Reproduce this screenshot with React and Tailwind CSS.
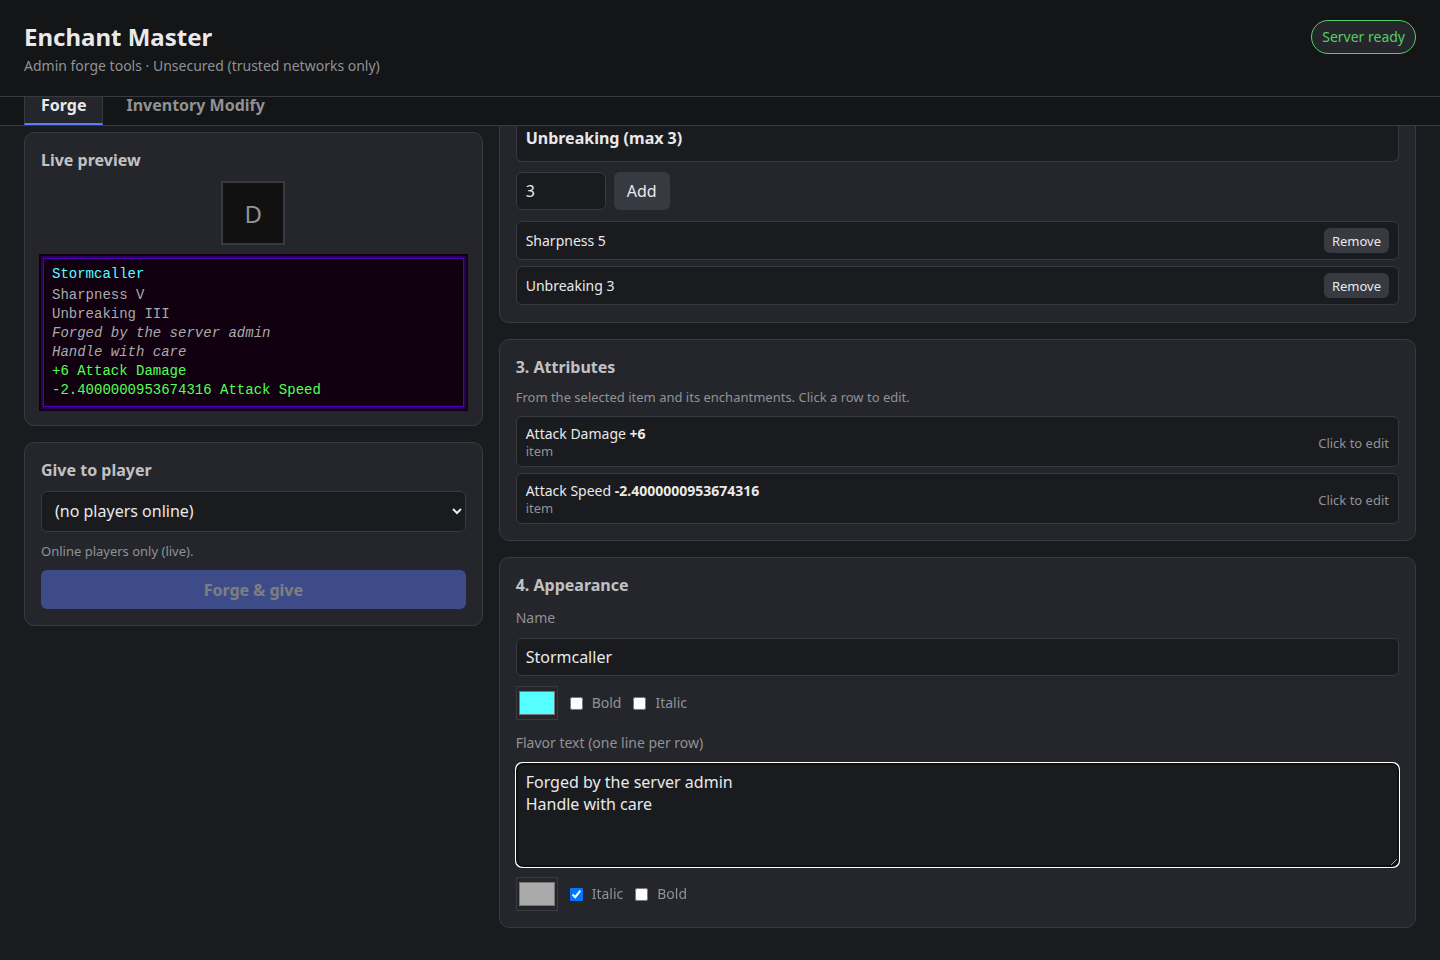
import { useState } from "react";

const enchantments = ["Sharpness 5", "Unbreaking 3"];

const attributes = [
  { name: "Attack Damage", value: "+6", source: "item" },
  { name: "Attack Speed", value: "-2.4000000953674316", source: "item" },
];

const Card = ({ title, children }) => (
  <section className="rounded-[10px] border border-[#373a40] bg-[#25262b] p-4">
    <h2 className="mb-2.5 text-base leading-[22px] font-bold text-[#c1c2c5]">
      {title}
    </h2>
    {children}
  </section>
);

const StyleOptions = ({ label, color, setColor, options }) => (
  <div className="mt-2.5 flex items-center gap-3">
    <input
      type="color"
      aria-label={label}
      value={color}
      onChange={(e) => setColor(e.target.value)}
      className="h-[34px] w-[42px] border border-[#373a40] p-0"
    />
    {options.map((option) => (
      <label
        key={option.name}
        className="flex items-center gap-[9px] text-sm leading-5 text-[#909296]"
      >
        <input
          type="checkbox"
          defaultChecked={option.checked}
          className="size-[13px]"
        />
        {option.name}
      </label>
    ))}
  </div>
);

const App = () => {
  const [activeTab, setActiveTab] = useState("forge");
  const [level, setLevel] = useState("3");
  const [name, setName] = useState("Stormcaller");
  const [nameColor, setNameColor] = useState("#55ffff");
  const [flavor, setFlavor] = useState(
    "Forged by the server admin\nHandle with care"
  );
  const [flavorColor, setFlavorColor] = useState("#aaaaaa");

  return (
    <div className="min-h-screen bg-[#1a1b1e] font-['Noto_Sans',sans-serif] text-base leading-[22px] text-[#e9e9eb]">
      <header className="flex items-start justify-between border-b border-[#373a40] bg-[#141517] px-6 py-5">
        <div>
          <h1 className="text-2xl leading-[34px] font-bold">Enchant Master</h1>
          <p className="mt-0.5 text-sm leading-5 text-[#909296]">
            Admin forge tools · Unsecured (trusted networks only)
          </p>
        </div>
        <span className="rounded-full border border-[#51cf66] bg-[#25262b] px-2.5 py-1.5 text-sm leading-5 text-[#51cf66]">
          Server ready
        </span>
      </header>

      {/* Tabs */}
      <nav className="flex items-end gap-1.5 border-b border-[#373a40] bg-[#141517] px-6">
        {[
          { key: "forge", label: "Forge" },
          { key: "inventory", label: "Inventory Modify" },
        ].map((tab) => (
          <button
            key={tab.key}
            type="button"
            onClick={() => setActiveTab(tab.key)}
            className={`border-x px-4 pb-2.5 leading-4 font-bold ${
              activeTab === tab.key
                ? "border-x-[#373a40] border-b-2 border-b-[#5c7cfa] bg-[#25262b]"
                : "border-b-2 border-transparent text-[#909296]"
            }`}
          >
            {tab.label}
          </button>
        ))}
      </nav>

      <main className="grid grid-cols-[1fr_2fr] items-start gap-4 px-6 pb-8">
        <aside className="flex flex-col gap-4 pt-1.5">
          <Card title="Live preview">
            <div className="mx-auto flex size-16 items-center justify-center border-2 border-[#373a40] bg-[#111111] pt-0.5 text-2xl text-[#909296]">
              D
            </div>
            {/* Item tooltip */}
            <div className="mt-[11px] border-2 border-[#25015b] bg-[#100010] px-[9px] py-[7px] font-['Liberation_Mono',monospace] text-sm leading-[19px] text-[#aaaaaa] shadow-[0_0_0_2px_#100010,inset_0_0_0_1px_#5000b0]">
              <p className="mb-0.5 text-[#55ffff]">{name}</p>
              <p>Sharpness V</p>
              <p>Unbreaking III</p>
              <p className="whitespace-pre-line italic">{flavor}</p>
              <p className="text-[#55ff55]">+6 Attack Damage</p>
              <p className="text-[#55ff55]">-2.4000000953674316 Attack Speed</p>
            </div>
          </Card>

          <Card title="Give to player">
            <select
              aria-label="Player"
              className="block h-[41px] w-full rounded-md border border-[#373a40] bg-[#1a1b1e] px-[9px] pb-0.5"
            >
              <option>(no players online)</option>
            </select>
            <p className="mt-2.5 text-[13px] leading-[18px] text-[#909296]">
              Online players only (live).
            </p>
            <button
              type="button"
              disabled
              className="mt-2.5 h-[39px] w-full rounded-md bg-[#5c7cfa] font-bold opacity-45"
            >
              Forge &amp; give
            </button>
          </Card>
        </aside>

        <div className="flex flex-col gap-4">
          <section className="rounded-b-[10px] border-x border-b border-[#373a40] bg-[#25262b] px-4 pb-[17px]">
            <ul className="rounded-b-md border-x border-b border-[#373a40] bg-[#1a1b1e] px-[9px] pt-px pb-3">
              <li className="font-bold">Unbreaking (max 3)</li>
            </ul>
            <div className="mt-2.5 flex gap-2">
              <input
                type="number"
                aria-label="Level"
                value={level}
                onChange={(e) => setLevel(e.target.value)}
                className="h-[38px] w-[90px] rounded-md border border-[#373a40] bg-[#1a1b1e] px-[9px]"
              />
              <button
                type="button"
                className="rounded-md bg-[#373a40] px-[13px]"
              >
                Add
              </button>
            </div>
            <ul className="mt-[11px] flex flex-col gap-1.5">
              {enchantments.map((enchantment) => (
                <li
                  key={enchantment}
                  className="flex h-[39px] items-center justify-between rounded-md border border-[#373a40] bg-[#1a1b1e] px-[9px] text-sm"
                >
                  {enchantment}
                  <button
                    type="button"
                    className="h-[25px] rounded-md bg-[#373a40] px-2 pt-0.5 text-[13px]"
                  >
                    Remove
                  </button>
                </li>
              ))}
            </ul>
          </section>

          <Card title="3. Attributes">
            <p className="text-[13px] leading-[18px] text-[#909296]">
              From the selected item and its enchantments. Click a row to edit.
            </p>
            <div className="mt-2.5 flex flex-col gap-1.5">
              {attributes.map((attribute) => (
                <button
                  key={attribute.name}
                  type="button"
                  className="flex items-center justify-between rounded-md border border-[#373a40] bg-[#1a1b1e] px-[9px] pt-2 pb-1.5 text-left"
                >
                  <span className="flex flex-col">
                    <span className="text-sm leading-[18px]">
                      {attribute.name}{" "}
                      <strong className="font-bold">{attribute.value}</strong>
                    </span>
                    <span className="text-[13px] leading-[17px] text-[#909296]">
                      {attribute.source}
                    </span>
                  </span>
                  <span className="text-[13px] leading-[18px] text-[#909296]">
                    Click to edit
                  </span>
                </button>
              ))}
            </div>
          </Card>

          <Card title="4. Appearance">
            <label
              htmlFor="item-name"
              className="mt-3 block text-sm leading-5 text-[#909296]"
            >
              Name
            </label>
            <input
              id="item-name"
              type="text"
              value={name}
              onChange={(e) => setName(e.target.value)}
              className="mt-2.5 block h-[38px] w-full rounded-md border border-[#373a40] bg-[#1a1b1e] px-[9px]"
            />
            <StyleOptions
              label="Name color"
              color={nameColor}
              setColor={setNameColor}
              options={[{ name: "Bold" }, { name: "Italic" }]}
            />
            <label
              htmlFor="flavor"
              className="mt-[13px] block text-sm leading-5 text-[#909296]"
            >
              Flavor text (one line per row)
            </label>
            <textarea
              id="flavor"
              rows={4}
              autoFocus
              value={flavor}
              onChange={(e) => setFlavor(e.target.value)}
              className="mt-2.5 block h-[104px] w-full resize-y rounded-md border border-[#373a40] bg-[#1a1b1e] px-[9px] py-[7px] caret-transparent"
            />
            <StyleOptions
              label="Flavor text color"
              color={flavorColor}
              setColor={setFlavorColor}
              options={[{ name: "Italic", checked: true }, { name: "Bold" }]}
            />
          </Card>
        </div>
      </main>
    </div>
  );
};

export default App;
